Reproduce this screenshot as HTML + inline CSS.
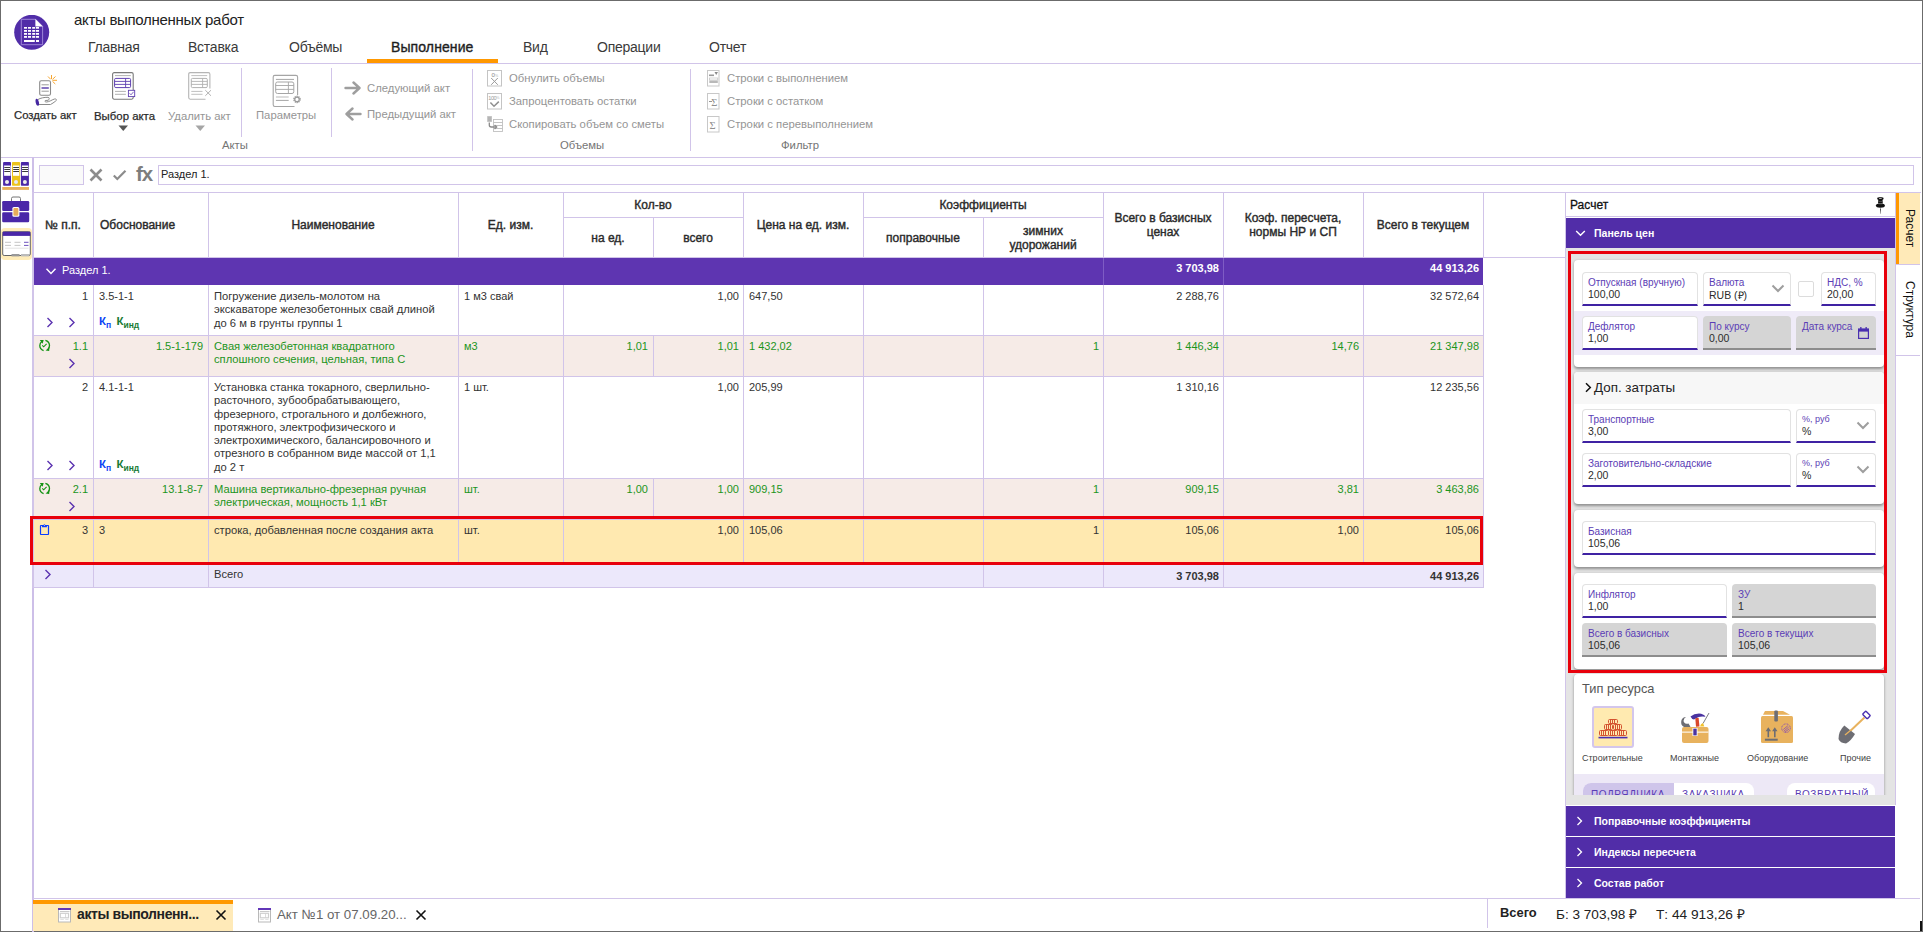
<!DOCTYPE html>
<html><head><meta charset="utf-8">
<style>
*{box-sizing:border-box;margin:0;padding:0}
html,body{width:1923px;height:932px;overflow:hidden;background:#fff}
body{position:relative;font-family:"Liberation Sans",sans-serif;color:#333}
.a{position:absolute}
.n{white-space:nowrap}
.hl{position:absolute;height:1px;background:#d1c4e9}
.vl{position:absolute;width:1px;background:#d1c4e9}
.tab{position:absolute;top:39px;font-size:14px;letter-spacing:-0.25px;color:#3a3a3a;white-space:nowrap}
.rb{position:absolute;font-size:11.3px;color:#959595;white-space:nowrap;line-height:13px}
.tx{position:absolute;font-size:11px;line-height:13.25px;color:#333;white-space:nowrap}
.tl{font-size:11.2px}
.th{position:absolute;font-size:12px;line-height:14px;color:#2a2a2a;-webkit-text-stroke:0.4px #2a2a2a;white-space:nowrap}
sub{font-size:8.5px;vertical-align:-3px;line-height:0}
</style></head><body>
<!-- frame -->
<div class="a" style="left:0;top:0;width:1923px;height:1px;background:#6b6b6b"></div>
<div class="a" style="left:0;top:0;width:1px;height:932px;background:#6b6b6b"></div>
<div class="a" style="left:1922px;top:0;width:1px;height:932px;background:#6b6b6b"></div>
<div class="a" style="left:0;top:931px;width:1923px;height:1px;background:#6b6b6b"></div>

<!-- HEADER -->
<svg class="a" style="left:14px;top:15px" width="36" height="36" viewBox="0 0 36 36">
<circle cx="17.7" cy="17.3" r="17.5" fill="#512da8"/>
<path d="M7.3 4.3 H21.6 L28.6 11.3 V29.7 H7.3 Z" fill="none" stroke="#a58fdc" stroke-width="0.9"/>
<path d="M21.4 4 L28.9 11.5 H21.4 Z" fill="#fff"/>
<g fill="#fff">
<rect x="10" y="12" width="3" height="1.7"/><rect x="14" y="12" width="3" height="1.7"/><rect x="18.2" y="12" width="3" height="1.7"/><rect x="22" y="12" width="3" height="1.7"/>
<rect x="10" y="15" width="3" height="1.8"/><rect x="14" y="15" width="3" height="1.8"/><rect x="18.2" y="15" width="3" height="1.8"/><rect x="22" y="15" width="3" height="1.8"/>
<rect x="10" y="18" width="3" height="1.8"/><rect x="14" y="18" width="3" height="1.8"/><rect x="18.2" y="18" width="3" height="1.8"/><rect x="22" y="18" width="3" height="1.8"/>
<rect x="10" y="21" width="3" height="1.8"/><rect x="14" y="21" width="3" height="1.8"/><rect x="18.2" y="21" width="3" height="1.8"/><rect x="22" y="21" width="3" height="1.8"/>
<rect x="10" y="25" width="10.8" height="2"/><rect x="22" y="25" width="3" height="2"/>
</g></svg>
<div class="a n" style="left:74px;top:11px;font-size:15px;letter-spacing:-0.3px;color:#222">акты выполненных работ</div>
<div class="tab" style="left:88px">Главная</div>
<div class="tab" style="left:188px">Вставка</div>
<div class="tab" style="left:289px">Объёмы</div>
<div class="tab" style="left:391px;font-size:14px;letter-spacing:0.1px;color:#1e1e1e;top:39px;-webkit-text-stroke:0.35px #1e1e1e">Выполнение</div>
<div class="tab" style="left:523px">Вид</div>
<div class="tab" style="left:597px">Операции</div>
<div class="tab" style="left:709px">Отчет</div>
<div class="a" style="left:367px;top:59px;width:131px;height:4px;background:#ff9800"></div>
<div class="hl" style="left:1px;top:63px;width:1920px"></div>

<!-- RIBBON -->
<!-- create act icon -->
<svg class="a" style="left:30px;top:70px" width="40" height="40" viewBox="0 0 40 40">
<rect x="9.7" y="10.8" width="10.8" height="14.5" rx="1.5" fill="#fff" stroke="#8a8a8a" stroke-width="1.1"/>
<line x1="11.5" y1="14.8" x2="18.8" y2="14.8" stroke="#9a9a9a" stroke-width="1"/>
<line x1="11.5" y1="18" x2="18.8" y2="18" stroke="#4527a0" stroke-width="1.3"/>
<line x1="11.5" y1="21.2" x2="18.8" y2="21.2" stroke="#9a9a9a" stroke-width="1"/>
<g stroke="#f59c1a" stroke-width="0.9"><line x1="21.5" y1="5" x2="21.5" y2="9"/><line x1="22.5" y1="10.3" x2="27" y2="10.3"/><line x1="18" y1="6.5" x2="20.7" y2="9.3"/><line x1="25.5" y1="6.5" x2="22.5" y2="9.3"/><line x1="22.5" y1="11.3" x2="25.3" y2="14"/></g>
<path d="M8 29.5 C10.5 28 14 27.3 18 27.3 C19.5 27.3 19.8 29.8 18 30.3 L15.3 30.5 C14.5 31.4 15.3 32 16.5 32 C19 32 22.5 29.5 24.5 29 C26.8 28.6 27 30.3 25.5 31.2 C24 32.3 22 33.8 20.5 34.5 L9 34.5" fill="none" stroke="#8a8a8a" stroke-width="1"/>
<ellipse cx="7.3" cy="32.3" rx="1.6" ry="3.6" transform="rotate(-12 7.3 32.3)" fill="#4527a0"/>
</svg>
<div class="rb" style="left:14px;top:109px;color:#2b2b2b;-webkit-text-stroke:0.25px #2b2b2b">Создать акт</div>
<!-- select act -->
<svg class="a" style="left:105px;top:68px" width="40" height="40" viewBox="0 0 40 40">
<rect x="7.6" y="4.6" width="20.6" height="26.6" rx="1.6" fill="#fff" stroke="#7a7a7a" stroke-width="1.1"/>
<line x1="10" y1="7.6" x2="25.8" y2="7.6" stroke="#a8a8a8" stroke-width="0.9"/>
<rect x="9.6" y="10.4" width="16" height="9.2" rx="1.2" fill="none" stroke="#5e3fb0" stroke-width="1"/>
<line x1="9.6" y1="13.4" x2="25.6" y2="13.4" stroke="#5e3fb0" stroke-width="0.9"/>
<line x1="9.6" y1="16.4" x2="25.6" y2="16.4" stroke="#5e3fb0" stroke-width="0.9"/>
<line x1="20.6" y1="10.4" x2="20.6" y2="19.6" stroke="#5e3fb0" stroke-width="0.9"/>
<line x1="10" y1="23.4" x2="20.9" y2="23.4" stroke="#a8a8a8" stroke-width="0.9"/>
<line x1="10" y1="26.3" x2="20.9" y2="26.3" stroke="#a8a8a8" stroke-width="0.9"/>
<rect x="23.4" y="22.3" width="6.3" height="6.3" fill="#fff" stroke="#5e3fb0" stroke-width="0.9"/>
<path d="M24.6 25.3 L26 26.8 L28.6 23.8" fill="none" stroke="#5e3fb0" stroke-width="0.8"/>
</svg>
<div class="rb" style="left:94px;top:110px;color:#2b2b2b;font-size:11.4px;-webkit-text-stroke:0.25px #2b2b2b">Выбор акта</div>
<svg class="a" style="left:118px;top:125px" width="11" height="7"><path d="M0.5 0.5 H10 L5.25 6 Z" fill="#555"/></svg>
<!-- delete act -->
<svg class="a" style="left:182px;top:68px" width="40" height="40" viewBox="0 0 40 40">
<path d="M23.5 31.2 H8.2 Q6.7 31.2 6.7 29.6 V6.2 Q6.7 4.6 8.2 4.6 H26.3 Q27.9 4.6 27.9 6.2 V20.5" fill="#fff" stroke="#b5b5b5" stroke-width="1.1"/>
<line x1="9.3" y1="7.6" x2="25.2" y2="7.6" stroke="#b8b8b8" stroke-width="0.9"/>
<rect x="9.3" y="10.4" width="16" height="9.2" rx="1.2" fill="none" stroke="#b0b0b0" stroke-width="1"/>
<line x1="9.3" y1="13.4" x2="25.3" y2="13.4" stroke="#b0b0b0" stroke-width="0.9"/>
<line x1="9.3" y1="16.4" x2="25.3" y2="16.4" stroke="#b0b0b0" stroke-width="0.9"/>
<line x1="20.6" y1="10.4" x2="20.6" y2="19.6" stroke="#b0b0b0" stroke-width="0.9"/>
<line x1="9.3" y1="23.4" x2="20.5" y2="23.4" stroke="#b8b8b8" stroke-width="0.9"/>
<line x1="9.3" y1="26.3" x2="20.5" y2="26.3" stroke="#b8b8b8" stroke-width="0.9"/>
<path d="M23.3 22.2 L29 27.8 M29 22.2 L23.3 27.8" stroke="#a8a8a8" stroke-width="0.9"/>
</svg>
<div class="rb" style="left:168px;top:110px">Удалить акт</div>
<svg class="a" style="left:195px;top:125px" width="11" height="7"><path d="M0.5 0.5 H10 L5.25 6 Z" fill="#a5a5a5"/></svg>
<div class="vl" style="left:241px;top:68px;height:69px"></div>
<div class="rb" style="left:222px;top:139px;color:#757575">Акты</div>
<!-- params -->
<svg class="a" style="left:265px;top:70px" width="40" height="40" viewBox="0 0 40 40">
<path d="M29.5 36.5 H9.8 Q8.2 36.5 8.2 34.8 V7.1 Q8.2 5.4 9.8 5.4 H30.9 Q32.6 5.4 32.6 7.1 V25" fill="#fff" stroke="#a5a5a5" stroke-width="1.1"/>
<line x1="10.9" y1="9.4" x2="29" y2="9.4" stroke="#a5a5a5" stroke-width="1"/>
<rect x="10.7" y="12" width="18.1" height="11.5" rx="1.8" fill="none" stroke="#a5a5a5" stroke-width="1"/>
<line x1="10.7" y1="15.5" x2="28.8" y2="15.5" stroke="#a5a5a5" stroke-width="0.9"/>
<line x1="10.7" y1="19.4" x2="28.8" y2="19.4" stroke="#a5a5a5" stroke-width="0.9"/>
<line x1="23.4" y1="12" x2="23.4" y2="23.5" stroke="#a5a5a5" stroke-width="0.9"/>
<line x1="10.9" y1="27" x2="23.7" y2="27" stroke="#c5c5c5" stroke-width="1.2"/>
<line x1="10.9" y1="30.4" x2="23.7" y2="30.4" stroke="#a5a5a5" stroke-width="1"/>
<circle cx="32" cy="29.4" r="3" fill="none" stroke="#9a9a9a" stroke-width="1.6" stroke-dasharray="1.2 0.7"/>
<circle cx="32" cy="29.4" r="2.2" fill="none" stroke="#9a9a9a" stroke-width="1.2"/>
</svg>
<div class="rb" style="left:256px;top:109px">Параметры</div>
<div class="vl" style="left:331px;top:68px;height:69px"></div>
<!-- arrows -->
<svg class="a" style="left:344px;top:81px" width="18" height="14" viewBox="0 0 18 14"><path d="M1.5 7 H15 M9.5 1.5 L15.5 7 L9.5 12.5" fill="none" stroke="#9e9e9e" stroke-width="2.4" stroke-linecap="round" stroke-linejoin="round"/></svg>
<div class="rb" style="left:367px;top:82px">Следующий акт</div>
<svg class="a" style="left:344px;top:107px" width="18" height="14" viewBox="0 0 18 14"><path d="M16.5 7 H3 M8.5 1.5 L2.5 7 L8.5 12.5" fill="none" stroke="#9e9e9e" stroke-width="2.4" stroke-linecap="round" stroke-linejoin="round"/></svg>
<div class="rb" style="left:367px;top:108px">Предыдущий акт</div>
<div class="vl" style="left:472px;top:69px;height:82px"></div>
<!-- volumes -->
<svg class="a" style="left:486px;top:69px" width="18" height="66" viewBox="0 0 18 66">
<g fill="none" stroke="#c4c4c4" stroke-width="1">
<rect x="1.5" y="1.5" width="14" height="15.5"/>
<rect x="1.5" y="24.5" width="14" height="15.5"/>
</g>
<text x="5.6" y="7.6" font-size="6.2" fill="#8a8a8a" font-family="Liberation Sans">0</text><text x="8.9" y="7.6" font-size="3.6" fill="#b0b0b0" font-family="Liberation Sans">%</text>
<path d="M5.2 9 L11.8 15.8 M11.8 9 L5.2 15.8" stroke="#9a9a9a" stroke-width="1"/>
<text x="2.3" y="30.6" font-size="5.6" fill="#9a9a9a" font-family="Liberation Sans" letter-spacing="-0.5">100</text><text x="10.3" y="30.2" font-size="3.6" fill="#b5b5b5" font-family="Liberation Sans">%</text>
<path d="M4.4 33.6 L8 37.3 L12.8 32.6" fill="none" stroke="#8f8f8f" stroke-width="1.5"/>
<rect x="1.2" y="47" width="4.7" height="6" fill="#c5c5c5"/><path d="M1.7 49H5.4M1.7 51H5.4" stroke="#9a9a9a" stroke-width="0.7"/>
<rect x="7.5" y="50.5" width="9" height="12" fill="#fff" stroke="#c0c0c0" stroke-width="0.9"/>
<line x1="7.5" y1="53.5" x2="16.5" y2="53.5" stroke="#bdbdbd" stroke-width="0.9"/><line x1="7.5" y1="56.5" x2="16.5" y2="56.5" stroke="#bdbdbd" stroke-width="0.9"/><line x1="7.5" y1="59.5" x2="16.5" y2="59.5" stroke="#bdbdbd" stroke-width="0.9"/>
<path d="M3.3 53.5 V56 Q3.3 58 5.3 58 H10" fill="none" stroke="#8a8a8a" stroke-width="1.3"/><path d="M8.6 56 L10.8 58 L8.6 60" fill="none" stroke="#8a8a8a" stroke-width="1.1"/>
</svg>
<div class="rb" style="left:509px;top:72px">Обнулить объемы</div>
<div class="rb" style="left:509px;top:95px">Запроцентовать остатки</div>
<div class="rb" style="left:509px;top:118px">Скопировать объем со сметы</div>
<div class="rb" style="left:560px;top:139px;color:#757575">Объемы</div>
<div class="vl" style="left:690px;top:69px;height:82px"></div>
<!-- filter -->
<svg class="a" style="left:705px;top:69px" width="16" height="66" viewBox="0 0 16 66">
<g fill="#fff" stroke="#c8c8c8" stroke-width="1">
<rect x="2.5" y="1.5" width="11.5" height="15.5"/>
<rect x="2.5" y="24.5" width="11.5" height="15.5"/>
<rect x="2.5" y="47.5" width="11.5" height="15.5"/>
</g>
<rect x="4" y="5.5" width="5" height="1.6" fill="#9a9a9a"/><path d="M9.5 3 H13 L11.2 6 Z" fill="#8a8a8a"/>
<rect x="4.3" y="9" width="8.5" height="2" fill="#fff" stroke="#bbb" stroke-width="0.6"/>
<rect x="4.3" y="11.5" width="8.5" height="2.5" fill="#b9b9b9"/>
<rect x="4" y="32" width="3" height="0.9" fill="#8a8a8a"/><text x="6.3" y="36.6" font-size="10.5" fill="#8f8f8f" font-family="Liberation Serif">Σ</text>
<text x="4.6" y="59.6" font-size="10.5" fill="#8f8f8f" font-family="Liberation Serif">Σ</text>
</svg>
<div class="rb" style="left:727px;top:72px">Строки с выполнением</div>
<div class="rb" style="left:727px;top:95px">Строки с остатком</div>
<div class="rb" style="left:727px;top:118px">Строки с перевыполнением</div>
<div class="rb" style="left:781px;top:139px;color:#757575">Фильтр</div>

<div class="hl" style="left:1px;top:157px;width:1920px"></div>

<!-- SIDEBAR -->
<div class="vl" style="left:32px;top:157px;height:775px;width:2px;background:#cdbfe8"></div>
<svg class="a" style="left:0px;top:158px" width="32" height="36" viewBox="0 0 32 36">
<rect x="3.1" y="4.1" width="7.9" height="23.7" rx="0.8" fill="#4a27a8"/>
<rect x="12" y="4.1" width="8.1" height="23.7" rx="0.8" fill="#ecc31c"/>
<rect x="20.9" y="4.1" width="8" height="23.7" rx="0.8" fill="#4a27a8"/>
<rect x="4.1" y="7.5" width="6.5" height="10.3" fill="#fff"/><rect x="13" y="7.5" width="6.3" height="10.3" fill="#fff"/><rect x="21.9" y="7.5" width="6.4" height="10.3" fill="#fff"/>
<g stroke="#3a3a3a" stroke-width="1"><path d="M4.3 9.5H10M4.3 11.5H10M4.3 13.5H10M13.2 9.5H19M13.2 11.5H19M13.2 13.5H19M22.1 9.5H28M22.1 11.5H28M22.1 13.5H28"/></g>
<circle cx="7" cy="24.1" r="2" fill="#eeeeea"/><circle cx="16" cy="24.1" r="2" fill="#e6e9f5"/><circle cx="24.9" cy="24.1" r="2" fill="#eeeeea"/>
<rect x="2.3" y="29" width="26.7" height="2.9" fill="#e8b15c"/>
</svg>
<svg class="a" style="left:1px;top:196px" width="30" height="28" viewBox="0 0 30 28">
<path d="M10.5 5 V2.5 Q10.5 1 12 1 H18 Q19.5 1 19.5 2.5 V5" fill="none" stroke="#777" stroke-width="1"/>
<rect x="1.2" y="5" width="27" height="10" rx="1.3" fill="#4a27a8"/>
<rect x="1.2" y="16.2" width="27" height="10" rx="1.3" fill="#4a27a8"/>
<rect x="11.4" y="11" width="7" height="9.8" rx="1.5" fill="#fff"/>
<rect x="12.4" y="12" width="5" height="7.8" rx="1" fill="#e8ab5a"/>
</svg>
<div class="a" style="left:1px;top:228px;width:31px;height:32px;background:#ffecb8;border-radius:4px"></div>
<svg class="a" style="left:1px;top:230px" width="31" height="29" viewBox="0 0 31 29">
<rect x="1.7" y="1.7" width="27.6" height="23.8" rx="1.5" fill="#fff" stroke="#666" stroke-width="1"/>
<rect x="1.7" y="1.7" width="27.6" height="4.2" fill="#4a27a8"/>
<g stroke-width="0.9"><path d="M4 12.3H10M13.5 12.3H19.5M4 15.4H10M13.5 15.4H19.5" stroke="#bdbdbd"/><path d="M23 12.3H27.5M23 15.4H27.5" stroke="#5e3fb5"/><path d="M4 18.2H27.5" stroke="#e0e0e0"/></g>
<rect x="10.5" y="24" width="8" height="2.4" fill="#999"/><rect x="20" y="24" width="8" height="2.4" fill="#bbb"/>
</svg>
<!-- FORMULA BAR -->
<div class="a" style="left:39px;top:165px;width:45px;height:20px;background:#fafafa;border:1px solid #d1c4e9"></div>
<svg class="a" style="left:88px;top:167px" width="16" height="16" viewBox="0 0 16 16"><path d="M2.5 2.5 L13.5 13.5 M13.5 2.5 L2.5 13.5" stroke="#8c8c8c" stroke-width="2.6"/></svg>
<svg class="a" style="left:112px;top:169px" width="16" height="12" viewBox="0 0 16 12"><path d="M1.8 6.5 L5.3 10 L13.5 1.8" fill="none" stroke="#8c8c8c" stroke-width="2.2"/></svg>
<div class="a n" style="left:136px;top:162px;font-size:20.5px;font-weight:bold;color:#7d7d7d;letter-spacing:-1.2px">fx</div>
<div class="a" style="left:158px;top:165px;width:1756px;height:20px;background:#fff;border:1px solid #d1c4e9"></div>
<div class="tx" style="left:161px;top:168px;color:#222">Раздел 1.</div>
<div class="hl" style="left:33px;top:192px;width:1888px"></div>

<!-- TABLE -->
<div class="a" style="left:33px;top:192px;width:1532px;height:1px;background:#d1c4e9;"></div>
<div class="a" style="left:33px;top:257px;width:1532px;height:1px;background:#d1c4e9;"></div>
<div class="a" style="left:563px;top:217px;width:180px;height:1px;background:#d1c4e9;"></div>
<div class="a" style="left:863px;top:217px;width:240px;height:1px;background:#d1c4e9;"></div>
<div class="a" style="left:33px;top:192px;width:1px;height:66px;background:#d1c4e9;"></div>
<div class="a" style="left:93px;top:192px;width:1px;height:66px;background:#d1c4e9;"></div>
<div class="a" style="left:208px;top:192px;width:1px;height:66px;background:#d1c4e9;"></div>
<div class="a" style="left:458px;top:192px;width:1px;height:66px;background:#d1c4e9;"></div>
<div class="a" style="left:563px;top:192px;width:1px;height:66px;background:#d1c4e9;"></div>
<div class="a" style="left:743px;top:192px;width:1px;height:66px;background:#d1c4e9;"></div>
<div class="a" style="left:863px;top:192px;width:1px;height:66px;background:#d1c4e9;"></div>
<div class="a" style="left:1103px;top:192px;width:1px;height:66px;background:#d1c4e9;"></div>
<div class="a" style="left:1223px;top:192px;width:1px;height:66px;background:#d1c4e9;"></div>
<div class="a" style="left:1363px;top:192px;width:1px;height:66px;background:#d1c4e9;"></div>
<div class="a" style="left:1483px;top:192px;width:1px;height:66px;background:#d1c4e9;"></div>
<div class="a" style="left:1565px;top:192px;width:1px;height:66px;background:#d1c4e9;"></div>
<div class="a" style="left:653px;top:217px;width:1px;height:41px;background:#d1c4e9;"></div>
<div class="a" style="left:983px;top:217px;width:1px;height:41px;background:#d1c4e9;"></div>
<div class="th" style="left:-87px;width:300px;top:218px;text-align:center;">№ п.п.</div>
<div class="th" style="left:100px;top:218px;">Обоснование</div>
<div class="th" style="left:183px;width:300px;top:218px;text-align:center;">Наименование</div>
<div class="th" style="left:360.5px;width:300px;top:218px;text-align:center;">Ед. изм.</div>
<div class="th" style="left:503px;width:300px;top:198px;text-align:center;">Кол-во</div>
<div class="th" style="left:458px;width:300px;top:231px;text-align:center;">на ед.</div>
<div class="th" style="left:548px;width:300px;top:231px;text-align:center;">всего</div>
<div class="th" style="left:653px;width:300px;top:218px;text-align:center;">Цена на ед. изм.</div>
<div class="th" style="left:833px;width:300px;top:198px;text-align:center;">Коэффициенты</div>
<div class="th" style="left:773px;width:300px;top:231px;text-align:center;">поправочные</div>
<div class="th" style="left:893px;width:300px;top:224px;text-align:center;line-height:14px">зимних<br>удорожаний</div>
<div class="th" style="left:1013px;width:300px;top:211px;text-align:center;line-height:14px">Всего в базисных<br>ценах</div>
<div class="th" style="left:1143px;width:300px;top:211px;text-align:center;line-height:14px">Коэф. пересчета,<br>нормы НР и СП</div>
<div class="th" style="left:1273px;width:300px;top:218px;text-align:center;">Всего в текущем</div>
<div class="a" style="left:34px;top:258px;width:1449px;height:27px;background:#5e35b1;"></div>
<div class="a" style="left:1103px;top:258px;width:1px;height:27px;background:#7e5cc4;"></div>
<div class="a" style="left:1223px;top:258px;width:1px;height:27px;background:#7e5cc4;"></div>
<svg class="a" style="left:45px;top:267px" width="12" height="9" viewBox="0 0 12 9"><path d="M1.5 1.8 L6 6.6 L10.5 1.8" fill="none" stroke="#fff" stroke-width="1.4"/></svg>
<div class="tx" style="left:62px;top:264px;color:#fff;font-size:11px">Раздел 1.</div>
<div class="tx" style="right:704px;top:262px;text-align:right;color:#fff;font-weight:bold">3 703,98</div>
<div class="tx" style="right:444px;top:262px;text-align:right;color:#fff;font-weight:bold">44 913,26</div>
<div class="a" style="left:33px;top:285px;width:1450px;height:50px;background:#fff;"></div>
<div class="a" style="left:33px;top:336px;width:1450px;height:40px;background:#f6ebe7;"></div>
<div class="a" style="left:33px;top:377px;width:1450px;height:101px;background:#fff;"></div>
<div class="a" style="left:33px;top:479px;width:1450px;height:40px;background:#f6ebe7;"></div>
<div class="a" style="left:33px;top:520px;width:1450px;height:44px;background:#ffe9b0;"></div>
<div class="a" style="left:33px;top:565px;width:1450px;height:22px;background:#ece8fb;"></div>
<div class="a" style="left:33px;top:335px;width:1451px;height:1px;background:#d1c4e9;"></div>
<div class="a" style="left:33px;top:376px;width:1451px;height:1px;background:#d1c4e9;"></div>
<div class="a" style="left:33px;top:478px;width:1451px;height:1px;background:#d1c4e9;"></div>
<div class="a" style="left:33px;top:519px;width:1451px;height:1px;background:#d1c4e9;"></div>
<div class="a" style="left:33px;top:564px;width:1451px;height:1px;background:#d1c4e9;"></div>
<div class="a" style="left:33px;top:587px;width:1451px;height:1px;background:#d1c4e9;"></div>
<div class="a" style="left:33px;top:285px;width:1px;height:50px;background:#d1c4e9;"></div>
<div class="a" style="left:93px;top:285px;width:1px;height:50px;background:#d1c4e9;"></div>
<div class="a" style="left:208px;top:285px;width:1px;height:50px;background:#d1c4e9;"></div>
<div class="a" style="left:458px;top:285px;width:1px;height:50px;background:#d1c4e9;"></div>
<div class="a" style="left:563px;top:285px;width:1px;height:50px;background:#d1c4e9;"></div>
<div class="a" style="left:743px;top:285px;width:1px;height:50px;background:#d1c4e9;"></div>
<div class="a" style="left:863px;top:285px;width:1px;height:50px;background:#d1c4e9;"></div>
<div class="a" style="left:983px;top:285px;width:1px;height:50px;background:#d1c4e9;"></div>
<div class="a" style="left:1103px;top:285px;width:1px;height:50px;background:#d1c4e9;"></div>
<div class="a" style="left:1223px;top:285px;width:1px;height:50px;background:#d1c4e9;"></div>
<div class="a" style="left:1363px;top:285px;width:1px;height:50px;background:#d1c4e9;"></div>
<div class="a" style="left:1483px;top:285px;width:1px;height:50px;background:#d1c4e9;"></div>
<div class="a" style="left:33px;top:336px;width:1px;height:40px;background:#d1c4e9;"></div>
<div class="a" style="left:93px;top:336px;width:1px;height:40px;background:#d1c4e9;"></div>
<div class="a" style="left:208px;top:336px;width:1px;height:40px;background:#d1c4e9;"></div>
<div class="a" style="left:458px;top:336px;width:1px;height:40px;background:#d1c4e9;"></div>
<div class="a" style="left:563px;top:336px;width:1px;height:40px;background:#d1c4e9;"></div>
<div class="a" style="left:653px;top:336px;width:1px;height:40px;background:#d1c4e9;"></div>
<div class="a" style="left:743px;top:336px;width:1px;height:40px;background:#d1c4e9;"></div>
<div class="a" style="left:863px;top:336px;width:1px;height:40px;background:#d1c4e9;"></div>
<div class="a" style="left:983px;top:336px;width:1px;height:40px;background:#d1c4e9;"></div>
<div class="a" style="left:1103px;top:336px;width:1px;height:40px;background:#d1c4e9;"></div>
<div class="a" style="left:1223px;top:336px;width:1px;height:40px;background:#d1c4e9;"></div>
<div class="a" style="left:1363px;top:336px;width:1px;height:40px;background:#d1c4e9;"></div>
<div class="a" style="left:1483px;top:336px;width:1px;height:40px;background:#d1c4e9;"></div>
<div class="a" style="left:33px;top:377px;width:1px;height:101px;background:#d1c4e9;"></div>
<div class="a" style="left:93px;top:377px;width:1px;height:101px;background:#d1c4e9;"></div>
<div class="a" style="left:208px;top:377px;width:1px;height:101px;background:#d1c4e9;"></div>
<div class="a" style="left:458px;top:377px;width:1px;height:101px;background:#d1c4e9;"></div>
<div class="a" style="left:563px;top:377px;width:1px;height:101px;background:#d1c4e9;"></div>
<div class="a" style="left:743px;top:377px;width:1px;height:101px;background:#d1c4e9;"></div>
<div class="a" style="left:863px;top:377px;width:1px;height:101px;background:#d1c4e9;"></div>
<div class="a" style="left:983px;top:377px;width:1px;height:101px;background:#d1c4e9;"></div>
<div class="a" style="left:1103px;top:377px;width:1px;height:101px;background:#d1c4e9;"></div>
<div class="a" style="left:1223px;top:377px;width:1px;height:101px;background:#d1c4e9;"></div>
<div class="a" style="left:1363px;top:377px;width:1px;height:101px;background:#d1c4e9;"></div>
<div class="a" style="left:1483px;top:377px;width:1px;height:101px;background:#d1c4e9;"></div>
<div class="a" style="left:33px;top:479px;width:1px;height:40px;background:#d1c4e9;"></div>
<div class="a" style="left:93px;top:479px;width:1px;height:40px;background:#d1c4e9;"></div>
<div class="a" style="left:208px;top:479px;width:1px;height:40px;background:#d1c4e9;"></div>
<div class="a" style="left:458px;top:479px;width:1px;height:40px;background:#d1c4e9;"></div>
<div class="a" style="left:563px;top:479px;width:1px;height:40px;background:#d1c4e9;"></div>
<div class="a" style="left:653px;top:479px;width:1px;height:40px;background:#d1c4e9;"></div>
<div class="a" style="left:743px;top:479px;width:1px;height:40px;background:#d1c4e9;"></div>
<div class="a" style="left:863px;top:479px;width:1px;height:40px;background:#d1c4e9;"></div>
<div class="a" style="left:983px;top:479px;width:1px;height:40px;background:#d1c4e9;"></div>
<div class="a" style="left:1103px;top:479px;width:1px;height:40px;background:#d1c4e9;"></div>
<div class="a" style="left:1223px;top:479px;width:1px;height:40px;background:#d1c4e9;"></div>
<div class="a" style="left:1363px;top:479px;width:1px;height:40px;background:#d1c4e9;"></div>
<div class="a" style="left:1483px;top:479px;width:1px;height:40px;background:#d1c4e9;"></div>
<div class="a" style="left:33px;top:520px;width:1px;height:44px;background:#d1c4e9;"></div>
<div class="a" style="left:93px;top:520px;width:1px;height:44px;background:#d1c4e9;"></div>
<div class="a" style="left:208px;top:520px;width:1px;height:44px;background:#d1c4e9;"></div>
<div class="a" style="left:458px;top:520px;width:1px;height:44px;background:#d1c4e9;"></div>
<div class="a" style="left:563px;top:520px;width:1px;height:44px;background:#d1c4e9;"></div>
<div class="a" style="left:743px;top:520px;width:1px;height:44px;background:#d1c4e9;"></div>
<div class="a" style="left:863px;top:520px;width:1px;height:44px;background:#d1c4e9;"></div>
<div class="a" style="left:983px;top:520px;width:1px;height:44px;background:#d1c4e9;"></div>
<div class="a" style="left:1103px;top:520px;width:1px;height:44px;background:#d1c4e9;"></div>
<div class="a" style="left:1223px;top:520px;width:1px;height:44px;background:#d1c4e9;"></div>
<div class="a" style="left:1363px;top:520px;width:1px;height:44px;background:#d1c4e9;"></div>
<div class="a" style="left:1483px;top:520px;width:1px;height:44px;background:#d1c4e9;"></div>
<div class="a" style="left:33px;top:565px;width:1px;height:22px;background:#d1c4e9;"></div>
<div class="a" style="left:93px;top:565px;width:1px;height:22px;background:#d1c4e9;"></div>
<div class="a" style="left:208px;top:565px;width:1px;height:22px;background:#d1c4e9;"></div>
<div class="a" style="left:983px;top:565px;width:1px;height:22px;background:#d1c4e9;"></div>
<div class="a" style="left:1103px;top:565px;width:1px;height:22px;background:#d1c4e9;"></div>
<div class="a" style="left:1223px;top:565px;width:1px;height:22px;background:#d1c4e9;"></div>
<div class="a" style="left:1483px;top:565px;width:1px;height:22px;background:#d1c4e9;"></div>
<div class="a" style="left:32px;top:192px;width:1px;height:396px;background:#d1c4e9;"></div>
<div class="tx" style="right:1835px;top:290px;text-align:right;">1</div>
<div class="tx" style="left:99px;top:290px;">3.5-1-1</div>
<div class="tx tl" style="left:214px;top:290px;">Погружение дизель-молотом на<br>экскаваторе железобетонных свай длиной<br>до 6 м в грунты группы 1</div>
<div class="tx" style="left:464px;top:290px;">1 м3 свай</div>
<div class="tx" style="right:1184px;top:290px;text-align:right;">1,00</div>
<div class="tx" style="left:749px;top:290px;">647,50</div>
<div class="tx" style="right:704px;top:290px;text-align:right;">2 288,76</div>
<div class="tx" style="right:444px;top:290px;text-align:right;">32 572,64</div>
<svg class="a" style="left:46px;top:317px" width="8" height="11" viewBox="0 0 8 11"><path d="M1.5 1 L6 5.5 L1.5 10" fill="none" stroke="#5a32b0" stroke-width="1.4"/></svg>
<svg class="a" style="left:68px;top:317px" width="8" height="11" viewBox="0 0 8 11"><path d="M1.5 1 L6 5.5 L1.5 10" fill="none" stroke="#5a32b0" stroke-width="1.4"/></svg>
<div class="tx" style="left:99px;top:315px;font-weight:bold;font-size:11.5px"><span style="color:#0c42f5">К<sub>п</sub></span> <span style="color:#167a32;margin-left:2px">К<sub>инд</sub></span></div>
<svg class="a" style="left:38px;top:339px" width="13" height="13" viewBox="0 0 13 13"><g fill="none" stroke="#139313" stroke-width="1.3"><path d="M5.6 11.6 Q1.8 10.3 1.8 6.5 Q1.9 4.2 3.8 2.6"/><path d="M7.4 1.3 Q11.4 2.5 11.5 6.4 Q11.4 8.6 10.2 10"/><path d="M4.3 6.3 L5.7 7.8 L8.6 4.9" stroke-width="1.1"/></g><path d="M1.8 1 L5.7 1 L4.6 4.7 Z M11.4 8 L11.2 11.9 L7.6 11.4 Z" fill="#139313"/></svg>
<div class="tx" style="right:1835px;top:340px;text-align:right;color:#1c951c">1.1</div>
<div class="tx" style="right:1720px;top:340px;text-align:right;color:#1c951c">1.5-1-179</div>
<div class="tx tl" style="left:214px;top:340px;color:#1c951c">Свая железобетонная квадратного<br>сплошного сечения, цельная, типа С</div>
<div class="tx" style="left:464px;top:340px;color:#1c951c">м3</div>
<div class="tx" style="right:1275px;top:340px;text-align:right;color:#1c951c">1,01</div>
<div class="tx" style="right:1184px;top:340px;text-align:right;color:#1c951c">1,01</div>
<div class="tx" style="left:749px;top:340px;color:#1c951c">1 432,02</div>
<div class="tx" style="right:824px;top:340px;text-align:right;color:#1c951c">1</div>
<div class="tx" style="right:704px;top:340px;text-align:right;color:#1c951c">1 446,34</div>
<div class="tx" style="right:564px;top:340px;text-align:right;color:#1c951c">14,76</div>
<div class="tx" style="right:444px;top:340px;text-align:right;color:#1c951c">21 347,98</div>
<svg class="a" style="left:68px;top:358px" width="8" height="11" viewBox="0 0 8 11"><path d="M1.5 1 L6 5.5 L1.5 10" fill="none" stroke="#5a32b0" stroke-width="1.4"/></svg>
<div class="tx" style="right:1835px;top:381px;text-align:right;">2</div>
<div class="tx" style="left:99px;top:381px;">4.1-1-1</div>
<div class="tx tl" style="left:214px;top:381px;">Установка станка токарного, сверлильно-<br>расточного, зубообрабатывающего,<br>фрезерного, строгального и долбежного,<br>протяжного, электрофизического и<br>электрохимического, балансировочного и<br>отрезного в собранном виде массой от 1,1<br>до 2 т</div>
<div class="tx" style="left:464px;top:381px;">1 шт.</div>
<div class="tx" style="right:1184px;top:381px;text-align:right;">1,00</div>
<div class="tx" style="left:749px;top:381px;">205,99</div>
<div class="tx" style="right:704px;top:381px;text-align:right;">1 310,16</div>
<div class="tx" style="right:444px;top:381px;text-align:right;">12 235,56</div>
<svg class="a" style="left:46px;top:460px" width="8" height="11" viewBox="0 0 8 11"><path d="M1.5 1 L6 5.5 L1.5 10" fill="none" stroke="#5a32b0" stroke-width="1.4"/></svg>
<svg class="a" style="left:68px;top:460px" width="8" height="11" viewBox="0 0 8 11"><path d="M1.5 1 L6 5.5 L1.5 10" fill="none" stroke="#5a32b0" stroke-width="1.4"/></svg>
<div class="tx" style="left:99px;top:458px;font-weight:bold;font-size:11.5px"><span style="color:#0c42f5">К<sub>п</sub></span> <span style="color:#167a32;margin-left:2px">К<sub>инд</sub></span></div>
<svg class="a" style="left:38px;top:482px" width="13" height="13" viewBox="0 0 13 13"><g fill="none" stroke="#139313" stroke-width="1.3"><path d="M5.6 11.6 Q1.8 10.3 1.8 6.5 Q1.9 4.2 3.8 2.6"/><path d="M7.4 1.3 Q11.4 2.5 11.5 6.4 Q11.4 8.6 10.2 10"/><path d="M4.3 6.3 L5.7 7.8 L8.6 4.9" stroke-width="1.1"/></g><path d="M1.8 1 L5.7 1 L4.6 4.7 Z M11.4 8 L11.2 11.9 L7.6 11.4 Z" fill="#139313"/></svg>
<div class="tx" style="right:1835px;top:483px;text-align:right;color:#1c951c">2.1</div>
<div class="tx" style="right:1720px;top:483px;text-align:right;color:#1c951c">13.1-8-7</div>
<div class="tx tl" style="left:214px;top:483px;color:#1c951c">Машина вертикально-фрезерная ручная<br>электрическая, мощность 1,1 кВт</div>
<div class="tx" style="left:464px;top:483px;color:#1c951c">шт.</div>
<div class="tx" style="right:1275px;top:483px;text-align:right;color:#1c951c">1,00</div>
<div class="tx" style="right:1184px;top:483px;text-align:right;color:#1c951c">1,00</div>
<div class="tx" style="left:749px;top:483px;color:#1c951c">909,15</div>
<div class="tx" style="right:824px;top:483px;text-align:right;color:#1c951c">1</div>
<div class="tx" style="right:704px;top:483px;text-align:right;color:#1c951c">909,15</div>
<div class="tx" style="right:564px;top:483px;text-align:right;color:#1c951c">3,81</div>
<div class="tx" style="right:444px;top:483px;text-align:right;color:#1c951c">3 463,86</div>
<svg class="a" style="left:68px;top:501px" width="8" height="11" viewBox="0 0 8 11"><path d="M1.5 1 L6 5.5 L1.5 10" fill="none" stroke="#5a32b0" stroke-width="1.4"/></svg>
<svg class="a" style="left:39px;top:524px" width="11" height="12" viewBox="0 0 11 12"><rect x="1.5" y="1.5" width="8" height="9" rx="0.4" fill="none" stroke="#0a3cff" stroke-width="1.2"/><path d="M3 0.9 H4.4 Q5.4 -0.3 6.4 0.9 H7.9 V3.3 H3 Z" fill="#0a3cff"/><circle cx="5.4" cy="1.4" r="0.5" fill="#ffe9b0"/></svg>
<div class="tx" style="right:1835px;top:524px;text-align:right;">3</div>
<div class="tx" style="left:99px;top:524px;">3</div>
<div class="tx tl" style="left:214px;top:524px;">строка, добавленная после создания акта</div>
<div class="tx" style="left:464px;top:524px;">шт.</div>
<div class="tx" style="right:1184px;top:524px;text-align:right;">1,00</div>
<div class="tx" style="left:749px;top:524px;">105,06</div>
<div class="tx" style="right:824px;top:524px;text-align:right;">1</div>
<div class="tx" style="right:704px;top:524px;text-align:right;">105,06</div>
<div class="tx" style="right:564px;top:524px;text-align:right;">1,00</div>
<div class="tx" style="right:444px;top:524px;text-align:right;">105,06</div>
<svg class="a" style="left:44px;top:569px" width="8" height="11" viewBox="0 0 8 11"><path d="M1.5 1 L6 5.5 L1.5 10" fill="none" stroke="#5a32b0" stroke-width="1.4"/></svg>
<div class="tx tl" style="left:214px;top:568px;">Всего</div>
<div class="tx" style="right:704px;top:570px;text-align:right;font-weight:bold">3 703,98</div>
<div class="tx" style="right:444px;top:570px;text-align:right;font-weight:bold">44 913,26</div>
<div class="a" style="left:30px;top:516px;width:1453px;height:49px;border:3px solid #e8000b"></div>
<!-- PANEL -->
<div class="a" style="left:1565px;top:192px;width:1px;height:706px;background:#d1c4e9"></div>
<div class="a" style="left:1566px;top:193px;width:329px;height:23px;background:#fff"></div>
<div class="a n" style="left:1570px;top:198px;font-size:12px;color:#111;-webkit-text-stroke:0.3px #111">Расчет</div>
<svg class="a" style="left:1874px;top:196px" width="12" height="19" viewBox="0 0 12 19"><ellipse cx="6.4" cy="2.6" rx="3.2" ry="1.5" fill="#111"/><ellipse cx="6.4" cy="2.3" rx="1.5" ry="0.5" fill="#ddd"/><path d="M4.3 3.5 H8.5 L8.8 7.6 H4 Z" fill="#111"/><path d="M4.6 5.4 H8.2" stroke="#888" stroke-width="0.5"/><ellipse cx="6.4" cy="9.6" rx="4.5" ry="2.2" fill="#111"/><path d="M4.5 7.8 H8.3" stroke="#888" stroke-width="0.5"/><path d="M6 12.6 H6.8 L6.55 17.8 H6.25 Z" fill="#111"/></svg>
<div class="a" style="left:1566px;top:216px;width:329px;height:1px;background:#d1c4e9"></div>
<div class="a" style="left:1566px;top:218px;width:329px;height:30px;background:#512da8"></div>
<div class="a" style="left:1895px;top:192px;width:1px;height:56px;background:#d1c4e9"></div>
<svg class="a" style="left:1575px;top:229px" width="11" height="9" viewBox="0 0 11 9"><path d="M1.2 2 L5.5 6.3 L9.8 2" fill="none" stroke="#fff" stroke-width="1.4"/></svg>
<div class="a n" style="left:1594px;top:227px;font-size:10.5px;font-weight:bold;color:#fff">Панель цен</div>
<div class="a" style="left:1566px;top:248px;width:329px;height:557px;background:#e4e4e4"></div>
<div class="a" style="left:1895px;top:248px;width:1px;height:557px;background:#d1c4e9"></div>
<div class="a" style="left:1574px;top:260px;width:310px;height:107px;background:#fff;border-radius:4px;box-shadow:0 1.5px 3px rgba(0,0,0,0.38);"></div>
<div class="a" style="left:1574px;top:311px;width:310px;height:44px;background:#efebf8"></div>
<div class="a" style="left:1582px;top:272px;width:116px;height:34px;background:#fff;border:1px solid #e2e2e2;border-radius:4px 4px 0 0;border-bottom:2px solid #3f22a3"></div>
<div class="a n" style="left:1588px;top:276.5px;font-size:10px;color:#5b3db5">Отпускная (вручную)</div>
<div class="a n" style="left:1588px;top:288.0px;font-size:10.5px;color:#2b2b2b">100,00</div>
<div class="a" style="left:1703px;top:272px;width:88px;height:34px;background:#fff;border:1px solid #e2e2e2;border-radius:4px 4px 0 0;border-bottom:2px solid #3f22a3"></div>
<div class="a n" style="left:1709px;top:276.5px;font-size:10px;color:#5b3db5">Валюта</div>
<div class="a n" style="left:1709px;top:288.0px;font-size:10.5px;color:#2b2b2b">RUB (₽)</div>
<svg class="a" style="left:1771px;top:284px" width="14" height="9" viewBox="0 0 14 9"><path d="M1.5 1.5 L7 7 L12.5 1.5" fill="none" stroke="#9e9e9e" stroke-width="2"/></svg>
<div class="a" style="left:1798px;top:281px;width:16px;height:16px;background:#fff;border:1px solid #dcdcdc;border-radius:2px"></div>
<div class="a" style="left:1821px;top:272px;width:55px;height:34px;background:#fff;border:1px solid #e2e2e2;border-radius:4px 4px 0 0;border-bottom:2px solid #3f22a3"></div>
<div class="a n" style="left:1827px;top:276.5px;font-size:10px;color:#5b3db5">НДС, %</div>
<div class="a n" style="left:1827px;top:288.0px;font-size:10.5px;color:#2b2b2b">20,00</div>
<div class="a" style="left:1582px;top:316px;width:116px;height:34px;background:#fff;border:1px solid #e2e2e2;border-radius:4px 4px 0 0;border-bottom:2px solid #3f22a3"></div>
<div class="a n" style="left:1588px;top:320.5px;font-size:10px;color:#5b3db5">Дефлятор</div>
<div class="a n" style="left:1588px;top:332.0px;font-size:10.5px;color:#2b2b2b">1,00</div>
<div class="a" style="left:1703px;top:316px;width:88px;height:34px;background:#d5d5d5;border-radius:4px 4px 0 0;border-bottom:2px solid #8d8d8d"></div>
<div class="a n" style="left:1709px;top:320.5px;font-size:10px;color:#5b3db5">По курсу</div>
<div class="a n" style="left:1709px;top:332.0px;font-size:10.5px;color:#2b2b2b">0,00</div>
<div class="a" style="left:1796px;top:316px;width:80px;height:34px;background:#d5d5d5;border-radius:4px 4px 0 0;border-bottom:2px solid #8d8d8d"></div>
<div class="a n" style="left:1802px;top:320.5px;font-size:10px;color:#5b3db5">Дата курса</div>
<svg class="a" style="left:1857px;top:326px" width="13" height="14" viewBox="0 0 13 14"><rect x="1.6" y="3" width="9.8" height="9.4" fill="none" stroke="#4a2fb0" stroke-width="1.2"/><rect x="1.6" y="3" width="9.8" height="2.6" fill="#4a2fb0"/><rect x="3.2" y="1" width="1.3" height="2.5" fill="#4a2fb0"/><rect x="8.5" y="1" width="1.3" height="2.5" fill="#4a2fb0"/></svg>
<div class="a" style="left:1574px;top:372px;width:310px;height:132px;background:#fff;border-radius:4px;box-shadow:0 1.5px 3px rgba(0,0,0,0.38);"></div>
<div class="a" style="left:1574px;top:372px;width:310px;height:32px;background:#f7f7f7;border-radius:4px 4px 0 0"></div>
<svg class="a" style="left:1584px;top:382px" width="9" height="11" viewBox="0 0 9 11"><path d="M2 1.2 L6.3 5.5 L2 9.8" fill="none" stroke="#111" stroke-width="1.5"/></svg>
<div class="a n" style="left:1594px;top:380px;font-size:13.4px;color:#222">Доп. затраты</div>
<div class="a" style="left:1582px;top:409px;width:209px;height:34px;background:#fff;border:1px solid #e2e2e2;border-radius:4px 4px 0 0;border-bottom:2px solid #3f22a3"></div>
<div class="a n" style="left:1588px;top:413.5px;font-size:10px;color:#5b3db5">Транспортные</div>
<div class="a n" style="left:1588px;top:425.0px;font-size:10.5px;color:#2b2b2b">3,00</div>
<div class="a" style="left:1796px;top:409px;width:80px;height:34px;background:#fff;border:1px solid #e2e2e2;border-radius:4px 4px 0 0;border-bottom:2px solid #3f22a3"></div>
<div class="a n" style="left:1802px;top:414.3px;font-size:9px;color:#5b3db5">%, руб</div>
<div class="a n" style="left:1802px;top:425.0px;font-size:10.5px;color:#2b2b2b">%</div>
<svg class="a" style="left:1856px;top:421px" width="14" height="9" viewBox="0 0 14 9"><path d="M1.5 1.5 L7 7 L12.5 1.5" fill="none" stroke="#9e9e9e" stroke-width="2"/></svg>
<div class="a" style="left:1582px;top:453px;width:209px;height:34px;background:#fff;border:1px solid #e2e2e2;border-radius:4px 4px 0 0;border-bottom:2px solid #3f22a3"></div>
<div class="a n" style="left:1588px;top:457.5px;font-size:10px;color:#5b3db5">Заготовительно-складские</div>
<div class="a n" style="left:1588px;top:469.0px;font-size:10.5px;color:#2b2b2b">2,00</div>
<div class="a" style="left:1796px;top:453px;width:80px;height:34px;background:#fff;border:1px solid #e2e2e2;border-radius:4px 4px 0 0;border-bottom:2px solid #3f22a3"></div>
<div class="a n" style="left:1802px;top:458.3px;font-size:9px;color:#5b3db5">%, руб</div>
<div class="a n" style="left:1802px;top:469.0px;font-size:10.5px;color:#2b2b2b">%</div>
<svg class="a" style="left:1856px;top:465px" width="14" height="9" viewBox="0 0 14 9"><path d="M1.5 1.5 L7 7 L12.5 1.5" fill="none" stroke="#9e9e9e" stroke-width="2"/></svg>
<div class="a" style="left:1574px;top:510px;width:310px;height:57px;background:#fff;border-radius:4px;box-shadow:0 1.5px 3px rgba(0,0,0,0.38);"></div>
<div class="a" style="left:1582px;top:521px;width:294px;height:34px;background:#fff;border:1px solid #e2e2e2;border-radius:4px 4px 0 0;border-bottom:2px solid #3f22a3"></div>
<div class="a n" style="left:1588px;top:525.5px;font-size:10px;color:#5b3db5">Базисная</div>
<div class="a n" style="left:1588px;top:537.0px;font-size:10.5px;color:#2b2b2b">105,06</div>
<div class="a" style="left:1574px;top:573px;width:310px;height:96px;background:#fff;border-radius:4px;box-shadow:0 1.5px 3px rgba(0,0,0,0.38);"></div>
<div class="a" style="left:1582px;top:584px;width:145px;height:34px;background:#fff;border:1px solid #e2e2e2;border-radius:4px 4px 0 0;border-bottom:2px solid #3f22a3"></div>
<div class="a n" style="left:1588px;top:588.5px;font-size:10px;color:#5b3db5">Инфлятор</div>
<div class="a n" style="left:1588px;top:600.0px;font-size:10.5px;color:#2b2b2b">1,00</div>
<div class="a" style="left:1732px;top:584px;width:144px;height:34px;background:#d5d5d5;border-radius:4px 4px 0 0;border-bottom:2px solid #8d8d8d"></div>
<div class="a n" style="left:1738px;top:588.5px;font-size:10px;color:#5b3db5">ЗУ</div>
<div class="a n" style="left:1738px;top:600.0px;font-size:10.5px;color:#2b2b2b">1</div>
<div class="a" style="left:1582px;top:623px;width:145px;height:34px;background:#d5d5d5;border-radius:4px 4px 0 0;border-bottom:2px solid #8d8d8d"></div>
<div class="a n" style="left:1588px;top:627.5px;font-size:10px;color:#5b3db5">Всего в базисных</div>
<div class="a n" style="left:1588px;top:639.0px;font-size:10.5px;color:#2b2b2b">105,06</div>
<div class="a" style="left:1732px;top:623px;width:144px;height:34px;background:#d5d5d5;border-radius:4px 4px 0 0;border-bottom:2px solid #8d8d8d"></div>
<div class="a n" style="left:1738px;top:627.5px;font-size:10px;color:#5b3db5">Всего в текущих</div>
<div class="a n" style="left:1738px;top:639.0px;font-size:10.5px;color:#2b2b2b">105,06</div>
<div class="a" style="left:1566px;top:674px;width:329px;height:121px;overflow:hidden">
<div class="a" style="left:8px;top:0;width:310px;height:140px;background:#fff;border-radius:4px;box-shadow:0 1.5px 3px rgba(0,0,0,0.38)"></div>
<div class="a n" style="left:16px;top:7px;font-size:12.8px;color:#555">Тип ресурса</div>
<div class="a" style="left:8px;top:100px;width:310px;height:40px;background:#ede8f6"></div>
<div class="a" style="left:17px;top:109px;width:171px;height:30px;background:#fff;border-radius:8px"></div>
<div class="a" style="left:17px;top:109px;width:91px;height:30px;background:#cfc5ea;border-radius:8px 0 0 8px"></div>
<div class="a n" style="left:25px;top:115px;font-size:10px;color:#5b3db5;letter-spacing:0.6px">ПОДРЯДЧИКА</div>
<div class="a n" style="left:116px;top:115px;font-size:10px;color:#5b3db5;letter-spacing:0.6px">ЗАКАЗЧИКА</div>
<div class="a" style="left:221px;top:109px;width:88px;height:30px;background:#fff;border-radius:8px"></div>
<div class="a n" style="left:229px;top:115px;font-size:10px;color:#5b3db5;letter-spacing:0.6px">ВОЗВРАТНЫЙ</div>
</div>
<div class="a" style="left:1592px;top:706px;width:42px;height:42px;background:#ffeab0;border:2px solid #d3c6ec;border-radius:3px"></div>
<svg class="a" style="left:1597px;top:716px" width="32" height="24" viewBox="0 0 32 24">
<g fill="none" stroke="#d4532f" stroke-width="1">
<rect x="11.5" y="3.5" width="9" height="4" rx="1"/>
<rect x="7.5" y="8.5" width="8" height="5" rx="1"/><rect x="16.5" y="8.5" width="8" height="5" rx="1"/>
<rect x="2.5" y="14.5" width="9" height="5" rx="1"/><rect x="11.5" y="14.5" width="9" height="5" rx="1"/><rect x="20.5" y="14.5" width="9" height="5" rx="1"/>
</g>
<g stroke="#d4532f" stroke-width="1"><path d="M13.5 4V7M15.5 4V7M17.5 4V7M9.5 9V13M11.5 9V13M13.5 9V13M18.5 9V13M20.5 9V13M22.5 9V13M4.5 15V19M6.5 15V19M8.5 15V19M13.5 15V19M15.5 15V19M17.5 15V19M22.5 15V19M24.5 15V19M26.5 15V19"/></g>
<rect x="1.5" y="20.8" width="29" height="1.6" fill="#4a2fb0"/>
</svg>
<svg class="a" style="left:1678px;top:712px" width="34" height="32" viewBox="0 0 34 32">
<path d="M3.5 8 Q2 13 6 15 Q9 16.3 12.5 14.8 L10.5 11.5 Q7.5 12.3 6.2 10.5 Q5 8.8 6.3 6.5 L8 5 Q4.8 5 3.5 8 Z" fill="#6d6d73"/>
<path d="M12.5 4.5 Q16 1.8 21 1.6 Q25.5 1.8 27.5 4.8 Q23.5 4.2 20.5 5 L16 7.5 Q14 7.5 12.5 4.5 Z" fill="#4a33a0"/>
<path d="M17.3 6.2 L20.6 5.8 L21.5 14.5 L18 14.8 Z" fill="#d9472b"/>
<line x1="25" y1="11.5" x2="31" y2="1" stroke="#6d6d73" stroke-width="0.9"/>
<path d="M22 14.5 Q22.5 11.5 25 11 L26.3 14.5 Z" fill="#f2c22c"/>
<rect x="4" y="15" width="26.5" height="16" rx="2" fill="#e8b25e"/>
<rect x="4" y="19.5" width="26.5" height="1.3" fill="#fff" opacity="0.8"/>
<rect x="14.5" y="16" width="5" height="8" fill="#fff"/><rect x="15.3" y="16.6" width="3.4" height="6.8" fill="#4a33a0"/>
</svg>
<svg class="a" style="left:1760px;top:710px" width="34" height="34" viewBox="0 0 34 34">
<path d="M5 1 H23 L30 4.8 H3 Z" fill="#e8b25e"/>
<rect x="1" y="6" width="32" height="27" rx="1.5" fill="#e8b25e"/>
<rect x="14.3" y="0.5" width="3.6" height="11" rx="1" fill="#6d6d73"/>
<path d="M8.3 17.3 L5.6 21.2 H7.5 V27.2 H9.1 V21.2 H11 Z M14.8 17.3 L12.1 21.2 H14 V27.2 H15.6 V21.2 H17.5 Z" fill="#6d6d73"/>
<rect x="4.9" y="28.7" width="12.8" height="2" fill="#6d6d73"/>
<circle cx="26" cy="18.2" r="4.3" fill="none" stroke="#7a3fc0" stroke-width="0.8" stroke-dasharray="1 0.6"/>
<path d="M23.3 19.5 L27.8 15.8 M24 21 L28.6 17.2 M25 22 L29 19" stroke="#7a3fc0" stroke-width="0.7"/>
</svg>
<svg class="a" style="left:1837px;top:710px" width="36" height="34" viewBox="0 0 36 34">
<line x1="9" y1="25" x2="27.5" y2="7.5" stroke="#e8b25e" stroke-width="2"/>
<rect x="27.2" y="1.6" width="4.6" height="6.6" rx="1" transform="rotate(-45 29.5 4.9)" fill="none" stroke="#4a2fb0" stroke-width="1.4"/>
<path d="M7.3 15.5 L18 24 Q14 31 9 33.5 Q3 33 1.5 29 Q1.5 21 7.3 15.5 Z" fill="#6d6d73"/>
<line x1="8" y1="25" x2="14" y2="20" stroke="#e8b25e" stroke-width="1.3"/>
</svg>
<div class="a n" style="left:1582px;top:753px;font-size:9px;color:#444">Строительные</div>
<div class="a n" style="left:1670px;top:753px;font-size:9px;color:#444">Монтажные</div>
<div class="a n" style="left:1747px;top:753px;font-size:9px;color:#444">Оборудование</div>
<div class="a n" style="left:1840px;top:753px;font-size:9px;color:#444">Прочие</div>
<div class="a" style="left:1566px;top:806px;width:329px;height:30px;background:#512da8"></div>
<svg class="a" style="left:1576px;top:816px" width="8" height="10" viewBox="0 0 8 10"><path d="M1.5 1 L5.5 5 L1.5 9" fill="none" stroke="#fff" stroke-width="1.3"/></svg>
<div class="a n" style="left:1594px;top:815px;font-size:10.5px;font-weight:bold;color:#fff">Поправочные коэффициенты</div>
<div class="a" style="left:1566px;top:837px;width:329px;height:30px;background:#512da8"></div>
<svg class="a" style="left:1576px;top:847px" width="8" height="10" viewBox="0 0 8 10"><path d="M1.5 1 L5.5 5 L1.5 9" fill="none" stroke="#fff" stroke-width="1.3"/></svg>
<div class="a n" style="left:1594px;top:846px;font-size:10.5px;font-weight:bold;color:#fff">Индексы пересчета</div>
<div class="a" style="left:1566px;top:868px;width:329px;height:30px;background:#512da8"></div>
<svg class="a" style="left:1576px;top:878px" width="8" height="10" viewBox="0 0 8 10"><path d="M1.5 1 L5.5 5 L1.5 9" fill="none" stroke="#fff" stroke-width="1.3"/></svg>
<div class="a n" style="left:1594px;top:877px;font-size:10.5px;font-weight:bold;color:#fff">Состав работ</div>
<div class="a" style="left:1568px;top:251px;width:319px;height:422px;border:3px solid #e8000b"></div>
<div class="a" style="left:1896px;top:193px;width:24px;height:71px;background:#ffeab8"></div>
<div class="a" style="left:1896px;top:193px;width:3px;height:71px;background:#ff9800"></div>
<div class="a" style="left:1896px;top:264px;width:24px;height:1px;background:#d1c4e9"></div>
<div class="a" style="left:1896px;top:355px;width:24px;height:1px;background:#d1c4e9"></div>
<div class="a n" style="left:1917px;top:209px;transform-origin:0 0;transform:rotate(90deg);font-size:12px;color:#111">Расчет</div>
<div class="a n" style="left:1917px;top:281px;transform-origin:0 0;transform:rotate(90deg);font-size:12px;color:#111">Структура</div>
<!-- BOTTOM TABS -->
<div class="hl" style="left:33px;top:898px;width:1887px"></div>
<div class="a" style="left:33px;top:900px;width:200px;height:31px;background:#ffeab8"></div>
<div class="a" style="left:33px;top:900px;width:200px;height:4px;background:#ff9800"></div>
<svg class="a" style="left:57px;top:907px" width="15" height="16" viewBox="0 0 15 16"><rect x="1.5" y="1.5" width="12" height="13.5" fill="#fff" stroke="#b9b9b9" stroke-width="1"/><rect x="1" y="1" width="13" height="2" fill="#6236b8"/><path d="M3 4.5H12.5" stroke="#bdbdbd" stroke-width="0.8"/><rect x="3.3" y="6.3" width="8.2" height="4.5" fill="#fff" stroke="#cfcfcf" stroke-width="1.2"/><path d="M8.6 6.3V10.8" stroke="#cfcfcf" stroke-width="0.8"/><path d="M3.3 12.5H6.8M8.3 12.5H11.5" stroke="#d5d5d5" stroke-width="0.7"/></svg>
<div class="a n" style="left:77px;top:906px;font-size:14px;letter-spacing:-0.4px;font-weight:bold;color:#222">акты выполненн...</div>
<svg class="a" style="left:215px;top:909px" width="12" height="12" viewBox="0 0 12 12"><path d="M1.5 1.5 L10.5 10.5 M10.5 1.5 L1.5 10.5" stroke="#111" stroke-width="1.6"/></svg>
<svg class="a" style="left:257px;top:907px" width="15" height="16" viewBox="0 0 15 16"><rect x="1.5" y="1.5" width="12" height="13.5" fill="#fff" stroke="#b9b9b9" stroke-width="1"/><rect x="1" y="1" width="13" height="2" fill="#6236b8"/><path d="M3 4.5H12.5" stroke="#bdbdbd" stroke-width="0.8"/><rect x="3.3" y="6.3" width="8.2" height="4.5" fill="#fff" stroke="#cfcfcf" stroke-width="1.2"/><path d="M8.6 6.3V10.8" stroke="#cfcfcf" stroke-width="0.8"/><path d="M3.3 12.5H6.8M8.3 12.5H11.5" stroke="#d5d5d5" stroke-width="0.7"/></svg>
<div class="a n" style="left:277px;top:907px;font-size:13.3px;color:#666">Акт №1 от 07.09.20...</div>
<svg class="a" style="left:415px;top:909px" width="12" height="12" viewBox="0 0 12 12"><path d="M1.5 1.5 L10.5 10.5 M10.5 1.5 L1.5 10.5" stroke="#111" stroke-width="1.6"/></svg>
<div class="vl" style="left:1487px;top:899px;height:29px"></div>
<div class="a n" style="left:1500px;top:905px;font-size:12.9px;font-weight:bold;color:#222">Всего</div>
<div class="a n" style="left:1556px;top:904px;font-size:13.6px;color:#222">Б: 3 703,98 ₽</div>
<div class="a n" style="left:1656px;top:904px;font-size:13.7px;color:#222">Т: 44 913,26 ₽</div>
<div class="a" style="left:1920px;top:921px;width:2px;height:10px;background:#111"></div>

</body></html>
